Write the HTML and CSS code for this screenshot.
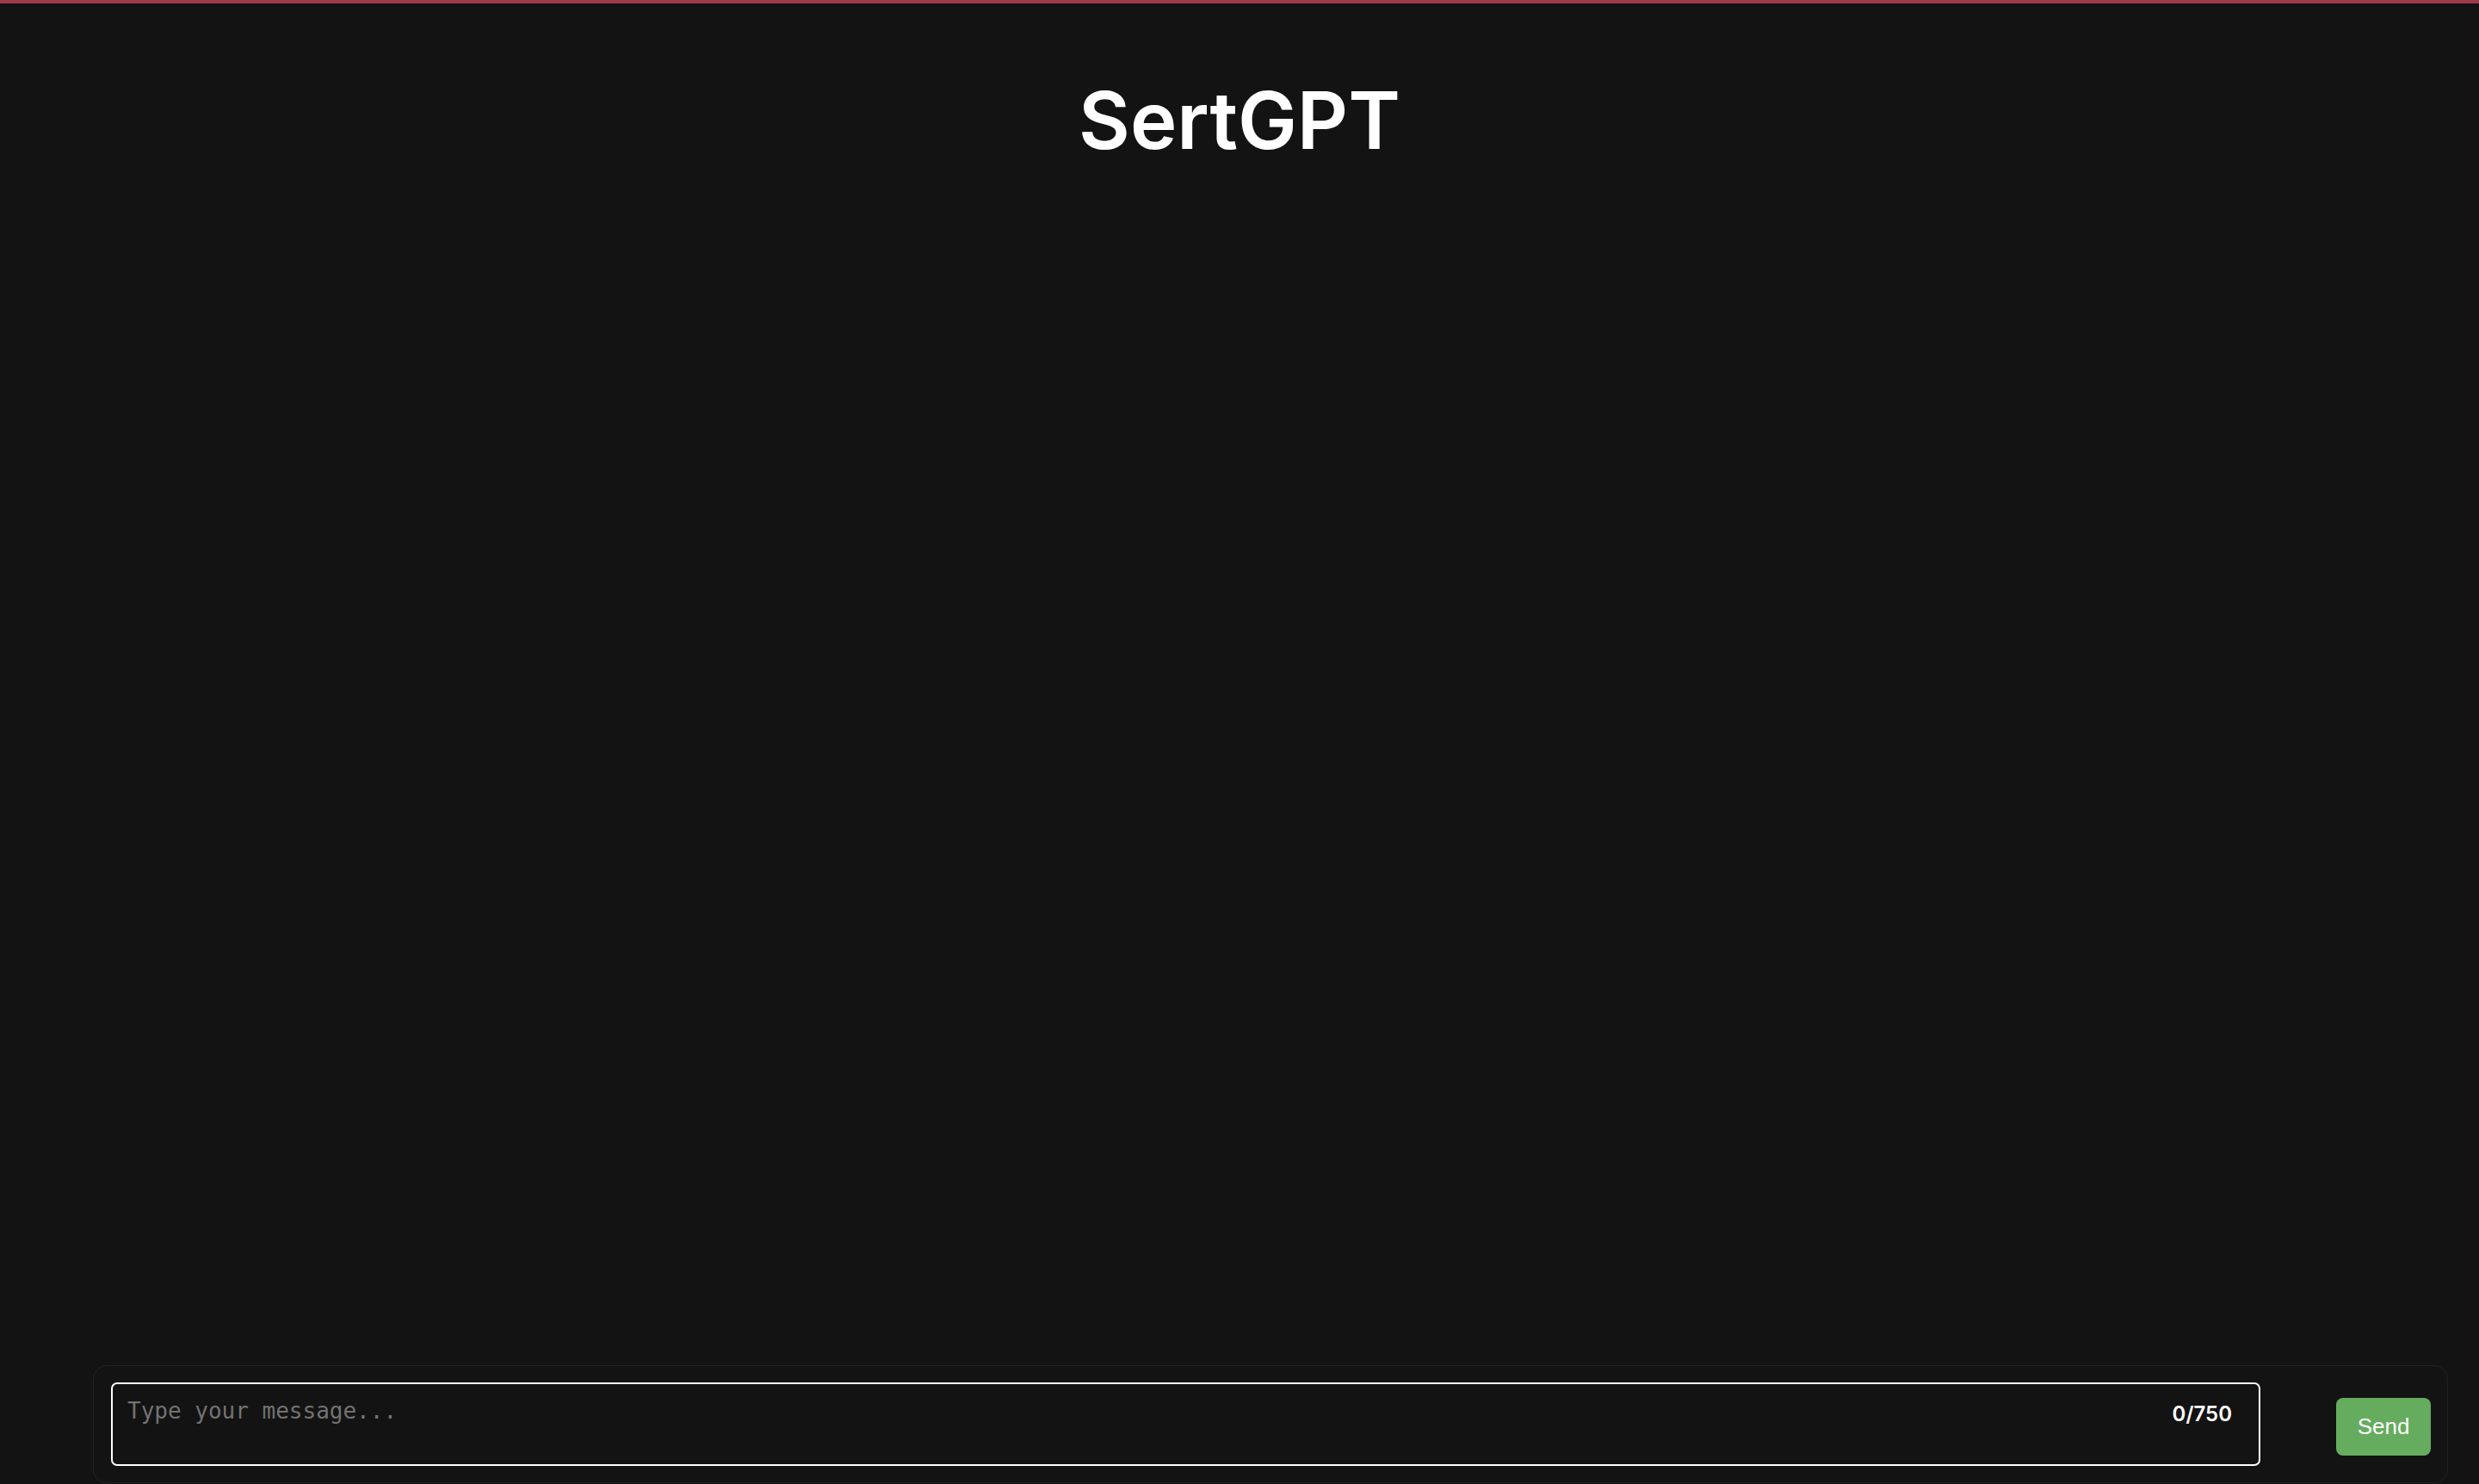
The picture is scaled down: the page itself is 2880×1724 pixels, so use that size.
FILE: index.html
```html
<!DOCTYPE html>
<html lang="en">
<head>
<meta charset="utf-8">
<title>SertGPT</title>
<link rel="stylesheet" href="styles.css">
</head>
<body>
<div class="app">
  <header class="header">
    <h1 class="title">SertGPT</h1>
  </header>
  <main class="messages"></main>
  <footer class="composer">
    <div class="input-wrap">
      <textarea class="input" placeholder="Type your message..."></textarea>
      <span class="counter">0/750</span>
    </div>
    <button class="send" type="button">Send</button>
  </footer>
</div>
</body>
</html>
```

FILE: styles.css
```css
html, body {
  margin: 0;
  padding: 0;
  height: 100%;
  background: #131313;
}

body {
  overflow: hidden;
}

.app {
  height: 100vh;
  box-sizing: border-box;
  border-top: 4px solid #9e3a47;
  display: flex;
  flex-direction: column;
}

.header {
  display: flex;
  justify-content: center;
  padding-top: 80px;
}

.title {
  margin: 0;
  font-family: Inter, "Noto Sans", sans-serif;
  font-weight: 600;
  font-size: 92px;
  line-height: normal;
  color: #ffffff;
  letter-spacing: 0;
}

.messages {
  flex: 1;
}

.composer {
  display: flex;
  align-items: flex-start;
  gap: 88px;
  margin: 0 36px 1px 108px;
  padding: 19px 19px 19px 20px;
  border: 1px solid #222222;
  border-radius: 16px;
}

.input-wrap {
  position: relative;
  flex: 1;
  display: flex;
}

.input {
  flex: 1;
  height: 97px;
  box-sizing: border-box;
  resize: none;
  margin: 0;
  padding: 16px 17px;
  background: #131313;
  color: #ffffff;
  border: 2px solid #ffffff;
  border-radius: 7px;
  font-family: "DejaVu Sans Mono", monospace;
  font-size: 26px;
  line-height: normal;
  outline: none;
}

.input::placeholder {
  color: #727272;
}

.counter {
  position: absolute;
  top: 22px;
  right: 33px;
  font-family: Inter, "Noto Sans", sans-serif;
  font-weight: 600;
  font-size: 24px;
  line-height: normal;
  color: #ffffff;
}

.send {
  margin-top: 18px;
  width: 110px;
  height: 67px;
  border: none;
  border-radius: 8px;
  background: #66ac5e;
  color: #ffffff;
  font-family: "Liberation Sans", Arial, sans-serif;
  font-size: 26px;
  padding: 0;
}
```
